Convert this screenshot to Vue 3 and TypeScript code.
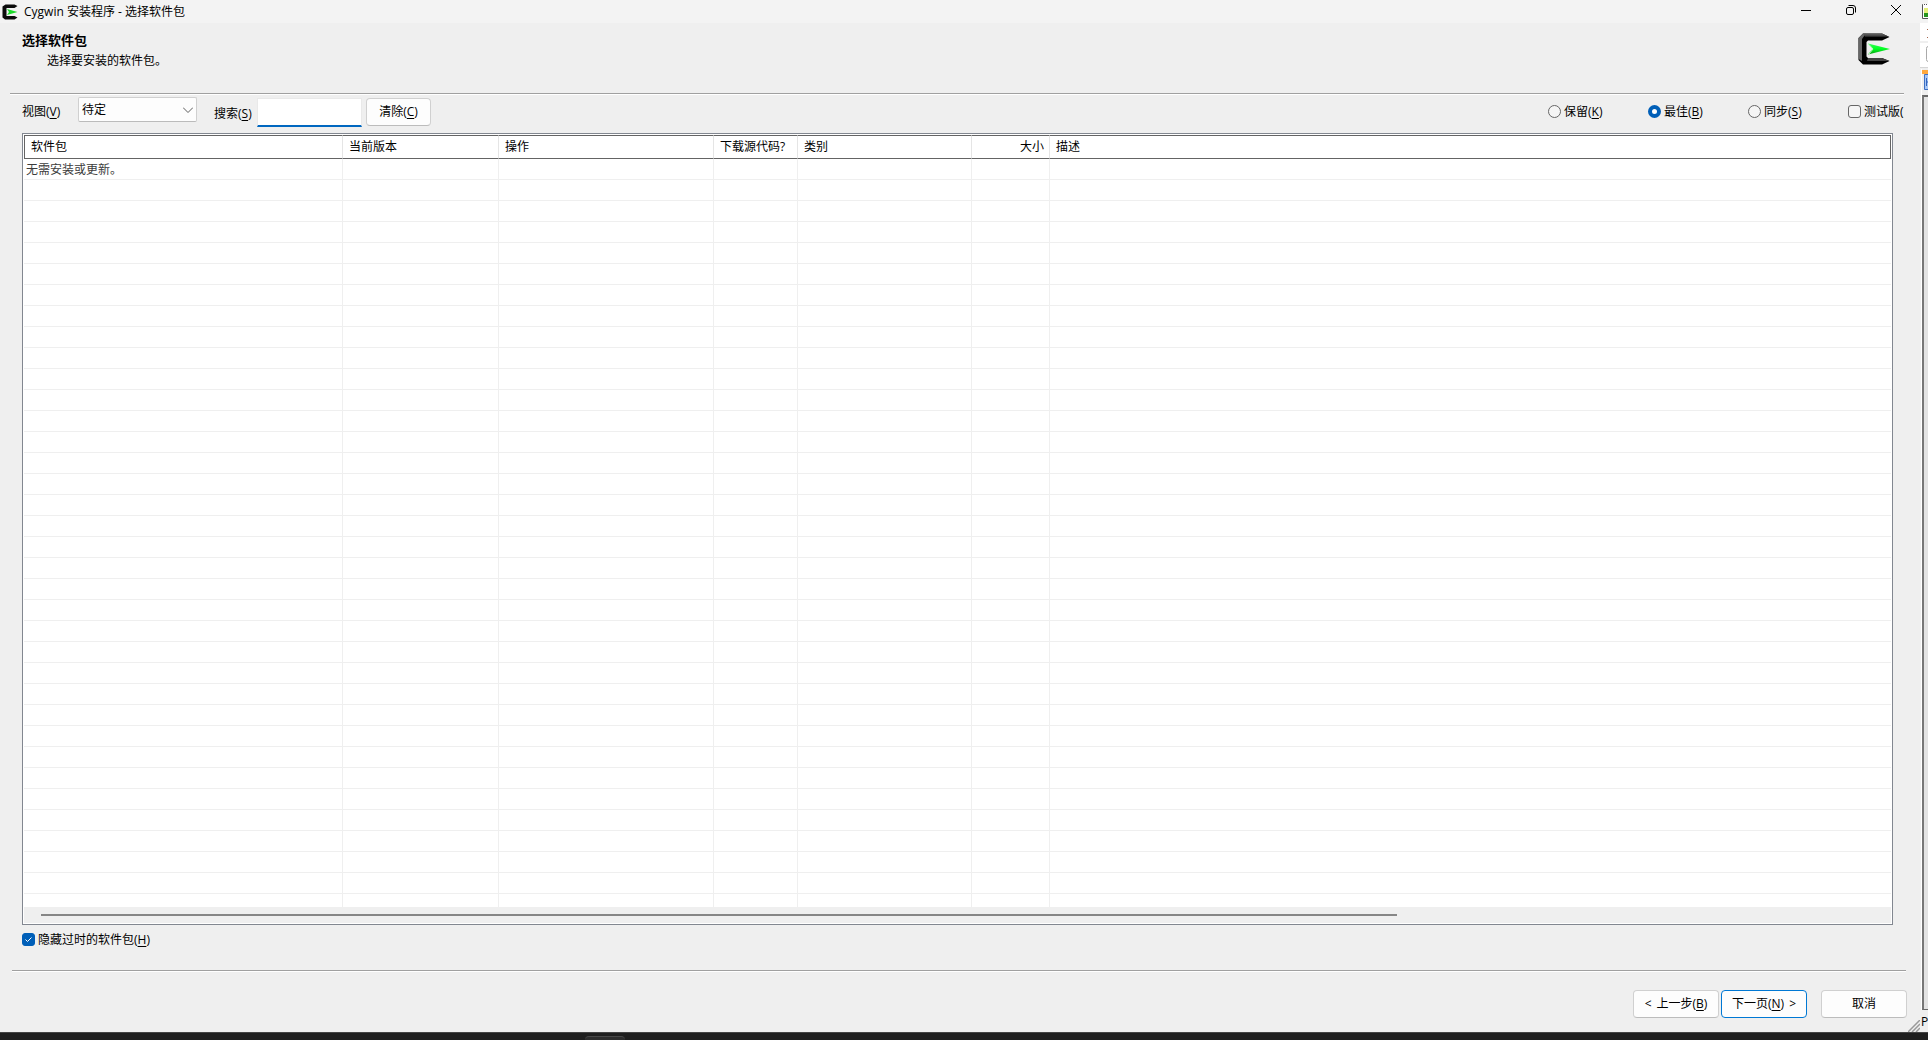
<script setup lang="ts">
import { ref } from 'vue'

interface Column {
  key: string
  title: string
  width?: number
  align?: 'right'
}

interface Mode {
  value: string
  label: string
  hotkey: string
}

const columns: Column[] = [
  { key: 'package', title: '软件包', width: 319 },
  { key: 'current', title: '当前版本', width: 156 },
  { key: 'action', title: '操作', width: 215 },
  { key: 'source', title: '下载源代码?', width: 84 },
  { key: 'category', title: '类别', width: 174 },
  { key: 'size', title: '大小', width: 78, align: 'right' },
  { key: 'description', title: '描述' },
]

const modes: Mode[] = [
  { value: 'keep', label: '保留', hotkey: 'K' },
  { value: 'best', label: '最佳', hotkey: 'B' },
  { value: 'sync', label: '同步', hotkey: 'S' },
]

const blankRows = 60
const scrollShare = 74
const mode = ref('best')
const view = ref('pending')
const search = ref('')
const test = ref(false)
const hideObsolete = ref(true)
</script>

<template>
  <div class="screen">
    <div class="desktop">
      <main class="window">
        <header class="titlebar">
          <svg class="app-icon" viewBox="0 0 32 32" aria-hidden="true">
            <path d="M7 1h18l6 3-6 4H9v16h16l6 3-6 4H6l-5-4V5z" fill="#0b0b0b" />
            <path d="M10 10l21 6-21 6 4-6z" fill="#1ddb2b" />
          </svg>
          <span class="caption">Cygwin 安装程序 - 选择软件包</span>
          <div class="window-buttons">
            <button type="button" aria-label="最小化">
              <svg viewBox="0 0 12 12"><path d="M1 6.5h10" /></svg>
            </button>
            <button type="button" aria-label="还原">
              <svg viewBox="0 0 12 12">
                <rect x="1.5" y="3.5" width="7" height="7" rx="1.5" />
                <path d="M3.5 1.5h4.5a2.5 2.5 0 0 1 2.5 2.5v4.5" />
              </svg>
            </button>
            <button type="button" aria-label="关闭">
              <svg viewBox="0 0 12 12"><path d="M1 1l10 10M11 1L1 11" /></svg>
            </button>
          </div>
        </header>

        <section class="banner">
          <div>
            <h1>选择软件包</h1>
            <p>选择要安装的软件包。</p>
          </div>
          <svg class="logo" viewBox="0 0 32 32" aria-hidden="true">
            <defs>
              <linearGradient id="bar" x1="0" y1="0" x2="0" y2="1">
                <stop offset="0" stop-color="#666" />
                <stop offset="1" stop-color="#333" />
              </linearGradient>
              <linearGradient id="dart" x1="0" y1="0" x2="0" y2="1">
                <stop offset="0" stop-color="#3f5" />
                <stop offset="0.5" stop-color="#0f2" />
                <stop offset="1" stop-color="#0a9a12" />
              </linearGradient>
            </defs>
            <path d="M5 .5h19l7.500 3.500-7.500 3.500H10L8.500 9v14.500L10 25h14l7.500 3-7.500 3.500H5L.5 27V5z" fill="#000" />
            <path d="M5 .5h3L4 6v22L.5 26V5z" fill="#666" />
            <path d="M5 .5h19l7 3.300H7z" fill="url(#bar)" />
            <path d="M10 25h14l7.500 3H9z" fill="#444" />
            <path d="M10 10.5L32 16l-22 5.500 4.500-5.500z" fill="url(#dart)" />
            <path d="M10.500 11l4.500 5-4 5" fill="none" stroke="#b8ffbd" />
          </svg>
        </section>
        <hr class="rule" />

        <section class="toolbar">
          <div class="field view-field">
            <label for="view">视图(<u>V</u>)</label>
            <div class="select-box">
              <select id="view" v-model="view">
                <option value="pending">待定</option>
              </select>
              <svg viewBox="0 0 10 6" aria-hidden="true"><path d="M0 .5l5 5 5-5" /></svg>
            </div>
          </div>
          <div class="field search-field">
            <label for="search">搜索(<u>S</u>)</label>
            <input id="search" v-model="search" type="text" />
          </div>
          <button type="button" class="push clear">清除(<u>C</u>)</button>
          <div class="modes">
            <label v-for="m in modes" :key="m.value" class="choice">
              <input v-model="mode" type="radio" name="mode" :value="m.value" />
              <span>{{ m.label }}(<u>{{ m.hotkey }}</u>)</span>
            </label>
            <label class="choice trial">
              <input v-model="test" type="checkbox" />
              <span>测试版(</span>
            </label>
          </div>
        </section>

        <section class="list">
          <div class="viewport">
            <table>
              <colgroup>
                <col
                  v-for="c in columns"
                  :key="c.key"
                  :style="c.width ? { width: c.width + 'px' } : undefined"
                />
              </colgroup>
              <thead>
                <tr>
                  <th v-for="c in columns" :key="c.key" scope="col" :class="c.align">{{ c.title }}</th>
                </tr>
              </thead>
              <tbody>
                <tr>
                  <td>无需安装或更新。</td>
                  <td v-for="c in columns.slice(1)" :key="c.key"></td>
                </tr>
                <tr v-for="n in blankRows" :key="n">
                  <td v-for="c in columns" :key="c.key"></td>
                </tr>
              </tbody>
            </table>
          </div>
          <div class="scrollbar">
            <div class="thumb" :style="{ width: scrollShare + '%' }"></div>
          </div>
        </section>

        <label class="choice obsolete">
          <input v-model="hideObsolete" type="checkbox" />
          <span>隐藏过时的软件包(<u>H</u>)</span>
        </label>

        <hr class="rule lower" />
        <footer class="actions">
          <button type="button" class="push step"><span>&lt;</span><span>上一步(<u>B</u>)</span></button>
          <button type="button" class="push step primary"><span>下一页(<u>N</u>)</span><span>&gt;</span></button>
          <button type="button" class="push cancel">取消</button>
        </footer>
        <svg class="grip" viewBox="0 0 12 12" aria-hidden="true">
          <path d="M0 12L12 0M4 12l8-8M8 12l4-4" stroke="#999" stroke-width="1.5" />
        </svg>
      </main>

      <!-- edge of the window lying behind -->
      <aside class="behind">
        <svg class="behind-top" viewBox="0 0 8 95" aria-hidden="true">
          <rect width="8" height="23" fill="#f3f3f3" />
          <path d="M8 4.500H2.500v14H8" fill="#fff" stroke="#555" />
          <path d="M3 4.500h5" stroke="#fff" stroke-dasharray="1 1" />
          <rect x="4" y="8" width="4" height="5" fill="#e4ef7a" />
          <rect x="4" y="13" width="4" height="4" fill="#27951f" />
          <rect y="23" width="8" height="18" fill="#fff" />
          <path d="M7 29.500h1M7 37.500h1" stroke="#a5644c" />
          <rect y="43" width="8" height="24" fill="#fff" />
          <path d="M8 46.500q-1.500 0-1.500 2v11q0 2 1.500 2" fill="none" stroke="#aaa" />
          <path d="M0 67.500h8" stroke="#d5d5d5" />
          <path d="M1.500 69v26" stroke="#fff" />
          <rect x="2" y="70" width="6" height="4" fill="#ffa83c" />
          <path d="M8 74.500H4.500v15H8" fill="#a9c8f5" stroke="#3d6fc4" />
          <path d="M6.500 78v8M7 82h1" stroke="#3465bd" />
        </svg>
        <div class="behind-body"></div>
        <span class="behind-status">P</span>
      </aside>
    </div>
    <div class="taskbar"><span></span></div>
  </div>
</template>

<style>
body {
  margin: 0;
}
</style>

<style scoped>
.screen {
  display: flex;
  flex-direction: column;
  height: 100vh;
  overflow: hidden;
  background: #efefef;
  color: #000;
  font: 12px/16px 'Open Sans', 'Noto Sans CJK SC', sans-serif;
}
.screen * {
  box-sizing: border-box;
}
button,
input,
select {
  margin: 0;
  font: inherit;
  color: inherit;
}
u {
  text-underline-offset: 2px;
}
.desktop {
  display: flex;
  flex: 1;
  min-height: 0;
}
.window {
  position: relative;
  display: flex;
  flex: 1;
  flex-direction: column;
  min-width: 0;
}
.titlebar {
  display: flex;
  align-items: center;
  height: 23px;
  padding: 0 2px;
  background: #f3f3f3;
}
.app-icon {
  width: 16px;
  height: 16px;
}
.caption {
  margin-left: 6px;
}
.window-buttons {
  display: flex;
  height: 100%;
  margin-left: auto;
}
.window-buttons button {
  display: flex;
  align-items: center;
  justify-content: center;
  width: 45px;
  padding: 0 0 3px;
  border: 0;
  background: none;
}
.window-buttons svg {
  width: 12px;
  height: 12px;
  fill: none;
  stroke: #000;
}
.banner {
  display: flex;
  justify-content: space-between;
  height: 70px;
  padding: 10px 30px 0 22px;
}
h1 {
  margin: 0;
  font-size: 13px;
  line-height: 14px;
}
p {
  margin: 6px 0 0 25px;
}
.logo {
  width: 32px;
  height: 32px;
}
.rule {
  width: auto;
  height: 2px;
  margin: 0 16px 0 10px;
  border: 0;
  border-top: 1px solid #a0a0a0;
  background: #fff;
}
.toolbar {
  display: flex;
  height: 38px;
  padding: 2px 15px 0 22px;
}
.field {
  display: flex;
  height: 30px;
}
.view-field label {
  width: 56px;
  line-height: 30px;
}
.select-box {
  position: relative;
  width: 119px;
  height: 25px;
}
.select-box select {
  width: 100%;
  height: 100%;
  padding: 0 3px;
  border: 1px solid #d0d0d0;
  border-bottom-color: #bbb;
  border-radius: 2px;
  background: #fdfdfd;
  appearance: none;
}
.select-box svg {
  position: absolute;
  top: 10px;
  right: 4px;
  width: 10px;
  height: 6px;
  fill: none;
  stroke: #5c5c5c;
  pointer-events: none;
}
.search-field {
  align-items: flex-end;
  margin-left: 17px;
}
.search-field label {
  width: 43px;
  line-height: 26px;
}
.search-field input {
  width: 105px;
  height: 29px;
  padding: 0 4px;
  border: 1px solid #e9e9e9;
  border-bottom: 2px solid #0067c0;
  background: #fff;
  outline: 0;
}
.push {
  width: 86px;
  height: 28px;
  padding: 0;
  border: 1px solid #d0d0d0;
  border-bottom-color: #bcbcbc;
  border-radius: 4px;
  background: #fdfdfd;
}
.clear {
  width: 65px;
  margin: 1px 0 0 4px;
}
.step {
  display: flex;
  align-items: center;
  justify-content: center;
  gap: 5px;
}
.primary {
  border-color: #0078d4;
}
.modes {
  display: flex;
  height: 29px;
  margin-left: auto;
}
.choice {
  display: flex;
  align-items: center;
  gap: 3px;
  white-space: nowrap;
}
.modes .choice {
  width: 100px;
}
.modes .trial {
  width: 57px;
  overflow: hidden;
}
.choice input {
  flex: none;
  width: 13px;
  height: 13px;
  border: 1px solid #666;
  background: #f5f5f5;
  appearance: none;
}
.choice input[type='radio'] {
  border-radius: 50%;
}
.choice input[type='radio']:checked {
  border: 4px solid #005fb8;
  background: #fff;
}
.choice input[type='checkbox'] {
  border-radius: 3px;
}
.choice input[type='checkbox']:checked {
  border-color: #005fb8;
  background: #005fb8
    url("data:image/svg+xml,%3Csvg xmlns='http://www.w3.org/2000/svg' viewBox='0 0 11 11'%3E%3Cpath d='M2.5 5.5l2 2 4-4' fill='none' stroke='white'/%3E%3C/svg%3E");
}
.list {
  display: flex;
  flex: 1;
  flex-direction: column;
  min-height: 0;
  margin: 0 27px 0 22px;
  padding: 1px;
  border: 1px solid #828790;
  background: #fff;
}
.viewport {
  flex: 1;
  min-height: 0;
  overflow: hidden;
}
table {
  width: 100%;
  border-spacing: 0;
  table-layout: fixed;
}
th,
td {
  overflow: hidden;
  border-right: 1px solid #efefef;
  text-align: left;
  white-space: nowrap;
}
th {
  height: 24px;
  padding: 0 5px 0 6px;
  border-top: 1px solid #646464;
  border-bottom: 1px solid #646464;
  border-right-color: #e5e5e5;
  font-weight: normal;
}
th.right {
  text-align: right;
}
th:first-child {
  border-left: 1px solid #646464;
}
th:last-child {
  border-right-color: #646464;
}
td {
  height: 21px;
  padding: 2px 2px 0;
  border-bottom: 1px solid #efefef;
  color: #3c3c3c;
}
td:last-child {
  border-right: 0;
}
.scrollbar {
  display: flex;
  align-items: center;
  height: 16px;
  padding: 0 17px;
  background: #efefef;
}
.thumb {
  height: 2px;
  background: #868686;
}
.obsolete {
  align-self: flex-start;
  height: 29px;
  margin-left: 22px;
}
.lower {
  margin: 16px 14px 0 12px;
}
.actions {
  display: flex;
  justify-content: flex-end;
  gap: 2px;
  padding: 18px 13px 14px;
}
.cancel {
  margin-left: 12px;
}
.grip {
  position: absolute;
  right: 0;
  bottom: 0;
  width: 12px;
  height: 12px;
}
.behind {
  display: flex;
  flex-direction: column;
  width: 8px;
  overflow: hidden;
}
.behind-top {
  flex: none;
  width: 8px;
  height: 95px;
}
.behind-body {
  flex: 1;
  margin-left: 2px;
  border: solid #696969;
  border-width: 2px 0 1px 2px;
  border-left-color: #777;
  background: #e3e3e3;
  box-shadow: -1px 0 #fff;
}
.behind-status {
  height: 22px;
  padding-left: 1px;
  line-height: 24px;
}
.taskbar {
  display: flex;
  justify-content: center;
  height: 8px;
  padding: 3px 0 0;
  border-top: 1px solid #444;
  background: #1f1f1f;
}
.taskbar span {
  width: 40px;
  margin-right: 718px;
  border-top: 1px solid #484848;
  border-radius: 4px 4px 0 0;
  background: #2d2d2d;
}
</style>
